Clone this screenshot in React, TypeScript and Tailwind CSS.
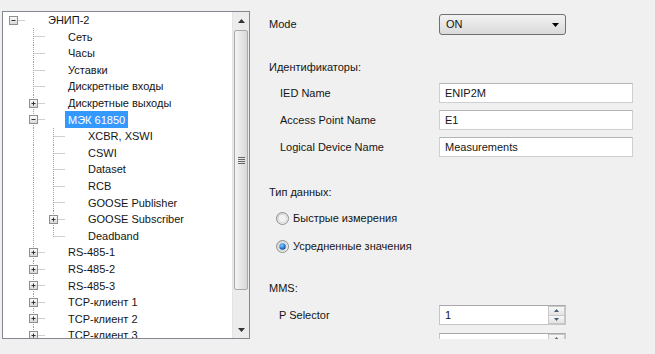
import React from "react";

type Node = {
  label: string;
  level: number;
  exp?: "plus" | "minus";
  last?: boolean;
  selected?: boolean;
};

const ROWS: Node[] = [
  { label: "ЭНИП-2", level: 0, exp: "minus" },
  { label: "Сеть", level: 1 },
  { label: "Часы", level: 1 },
  { label: "Уставки", level: 1 },
  { label: "Дискретные входы", level: 1 },
  { label: "Дискретные выходы", level: 1, exp: "plus" },
  { label: "МЭК 61850", level: 1, exp: "minus", selected: true },
  { label: "XCBR, XSWI", level: 2 },
  { label: "CSWI", level: 2 },
  { label: "Dataset", level: 2 },
  { label: "RCB", level: 2 },
  { label: "GOOSE Publisher", level: 2 },
  { label: "GOOSE Subscriber", level: 2, exp: "plus" },
  { label: "Deadband", level: 2, last: true },
  { label: "RS-485-1", level: 1, exp: "plus" },
  { label: "RS-485-2", level: 1, exp: "plus" },
  { label: "RS-485-3", level: 1, exp: "plus" },
  { label: "TCP-клиент 1", level: 1, exp: "plus" },
  { label: "TCP-клиент 2", level: 1, exp: "plus" },
  { label: "TCP-клиент 3", level: 1, exp: "plus" },
];

const LINE = "#a0a0a0";

function Guides({ node }: { node: Node }) {
  const w = 45 + node.level * 20;
  const cx = 10.5 + node.level * 20;
  const mid = 8.5;
  return (
    <svg width={w} height={17} className="shrink-0 overflow-visible">
      <defs>
        <linearGradient id="boxg" x1="0" y1="0" x2="0" y2="1">
          <stop offset="0" stopColor="#ffffff" />
          <stop offset="1" stopColor="#d6d6d6" />
        </linearGradient>
      </defs>
      {/* ancestor line: level 1 keeps going for level 2 rows */}
      {node.level === 2 && (
        <line x1={30.5} y1={0} x2={30.5} y2={17} stroke={LINE} strokeDasharray="1 1" />
      )}
      {node.level > 0 && (
        <line x1={cx} y1={0} x2={cx} y2={node.last ? mid : 17} stroke={LINE} strokeDasharray="1 1" />
      )}
      <line x1={cx} y1={mid} x2={cx + 12} y2={mid} stroke={LINE} strokeDasharray="1 1" />
      {node.exp && (
        <g>
          <rect x={cx - 4} y={mid - 4} width={8} height={8} fill="url(#boxg)" stroke="#8e8e8e" />
          <line x1={cx - 2} y1={mid} x2={cx + 2} y2={mid} stroke="#333" />
          {node.exp === "plus" && <line x1={cx} y1={mid - 2} x2={cx} y2={mid + 2} stroke="#333" />}
        </g>
      )}
    </svg>
  );
}

function TreeRow({ node }: { node: Node }) {
  return (
    <div className="flex h-[16.6px] items-center whitespace-nowrap">
      <Guides node={node} />
      {node.selected ? (
        <span className="-ml-[3px] flex h-[17px] items-center bg-[#3399ff] px-[3px] text-white">{node.label}</span>
      ) : (
        <span>{node.label}</span>
      )}
    </div>
  );
}

function Scrollbar() {
  return (
    <div className="flex w-[17px] shrink-0 flex-col bg-[#ececec] border-l border-[#e3e3e3]">
      <div className="flex h-[17px] items-center justify-center">
        <svg width="7" height="4"><path d="M3.5 0 L7 4 L0 4 Z" fill="#333" /></svg>
      </div>
      <div className="mx-[1px] mt-[1px] flex h-[260px] items-center justify-center rounded-[2px] border border-[#a8a8a8] bg-gradient-to-r from-[#f4f4f4] via-[#e6e6e6] to-[#d8d8d8]">
        <div className="flex flex-col gap-[1px]">
          <div className="h-px w-[7px] bg-[#666]" />
          <div className="h-px w-[7px] bg-[#666]" />
          <div className="h-px w-[7px] bg-[#666]" />
          <div className="h-px w-[7px] bg-[#666]" />
        </div>
      </div>
      <div className="flex-1" />
      <div className="flex h-[17px] items-center justify-center">
        <svg width="7" height="4"><path d="M0 0 L7 0 L3.5 4 Z" fill="#333" /></svg>
      </div>
    </div>
  );
}

function Radio({ checked }: { checked?: boolean }) {
  return (
    <svg width="13" height="13" className="shrink-0">
      <defs>
        <linearGradient id="rg" x1="0" y1="0" x2="1" y2="1">
          <stop offset="0" stopColor="#d4d4d4" />
          <stop offset="1" stopColor="#f8f8f8" />
        </linearGradient>
        <radialGradient id="rd" cx="0.4" cy="0.35" r="0.7">
          <stop offset="0" stopColor="#8fd0ff" />
          <stop offset="0.6" stopColor="#2a7fd4" />
          <stop offset="1" stopColor="#0d3f84" />
        </radialGradient>
      </defs>
      <circle cx="6.5" cy="6.5" r="6" fill="url(#rg)" stroke="#8f8f8f" />
      <circle cx="6.5" cy="6.5" r="4.2" fill="#f2f2f2" stroke="#c9c9c9" strokeWidth="0.6" />
      {checked && <circle cx="6.5" cy="6.5" r="3.2" fill="url(#rd)" />}
    </svg>
  );
}

function TextBox({ value }: { value: string }) {
  return (
    <div className="flex h-[20px] w-[194px] items-center border border-[#cfcfcf] border-t-[#b5b5b5] bg-white px-[5px]">
      {value}
    </div>
  );
}

function Spinner({ value }: { value: string }) {
  return (
    <div className="flex h-[20px] w-[127px] border border-[#c5c5c5] border-t-[#a9a9a9] bg-white">
      <div className="flex flex-1 items-center px-[5px]">{value}</div>
      <div className="flex w-[17px] flex-col">
        <div className="flex flex-1 items-center justify-center border border-[#c8c8c8] bg-gradient-to-b from-[#f7f7f7] to-[#e3e3e3]">
          <svg width="5" height="3"><path d="M2.5 0 L5 3 L0 3 Z" fill="#4d5a72" /></svg>
        </div>
        <div className="flex flex-1 items-center justify-center border border-t-0 border-[#c8c8c8] bg-gradient-to-b from-[#f7f7f7] to-[#e3e3e3]">
          <svg width="5" height="3"><path d="M0 0 L5 0 L2.5 3 Z" fill="#4d5a72" /></svg>
        </div>
      </div>
    </div>
  );
}

export default function App() {
  return (
    <div className="flex h-[354px] w-[655px] flex-col overflow-hidden bg-[#f0f0f0] text-[11px] text-[#151515] [font-family:'Liberation_Sans',Arial,sans-serif]">
      <div className="flex h-[339px] shrink-0">
        {/* Tree */}
        <div className="ml-[2px] mt-[11px] flex h-[328px] w-[248px] shrink-0 border border-[#828790] bg-white">
          <div className="flex-1 overflow-hidden">
            {ROWS.map((r) => (
              <TreeRow key={r.label} node={r} />
            ))}
          </div>
          <Scrollbar />
        </div>

        {/* Settings */}
        <div className="flex flex-1 flex-col overflow-hidden pl-[19px] pt-[14px]">
          <div className="flex h-[21px] items-center">
            <div className="w-[170px]">Mode</div>
            <div className="flex h-[21px] w-[127px] items-center justify-between rounded-[3px] border border-[#707070] bg-gradient-to-b from-[#f2f2f2] to-[#dadada] pl-[6px] pr-[6px]">
              <span>ON</span>
              <svg width="7" height="4"><path d="M0 0 L7 0 L3.5 4 Z" fill="#000" /></svg>
            </div>
          </div>

          <div className="mt-[25px] h-[14px] leading-[14px]">Идентификаторы:</div>
          <div className="mt-[9px] flex flex-col gap-[7px]">
            {[
              ["IED Name", "ENIP2M"],
              ["Access Point Name", "E1"],
              ["Logical Device Name", "Measurements"],
            ].map(([l, v]) => (
              <div key={l} className="flex items-center pl-[11px]">
                <div className="w-[159px]">{l}</div>
                <TextBox value={v} />
              </div>
            ))}
          </div>

          <div className="mt-[28px] h-[14px] leading-[14px]">Тип данных:</div>
          <div className="mt-[11px] flex h-[16px] items-center gap-[4px] pl-[7px]">
            <Radio />
            <span>Быстрые измерения</span>
          </div>
          <div className="mt-[12px] flex h-[16px] items-center gap-[4px] pl-[7px]">
            <Radio checked />
            <span>Усредненные значения</span>
          </div>

          <div className="mt-[27px] h-[14px] leading-[14px]">MMS:</div>
          <div className="mt-[10px] flex flex-col gap-[8px]">
            {["P Selector", "S Selector"].map((l) => (
              <div key={l} className="flex items-center pl-[10px]">
                <div className="w-[160px]">{l}</div>
                <Spinner value="1" />
              </div>
            ))}
          </div>
        </div>
      </div>
      <div className="flex-1" />
    </div>
  );
}
